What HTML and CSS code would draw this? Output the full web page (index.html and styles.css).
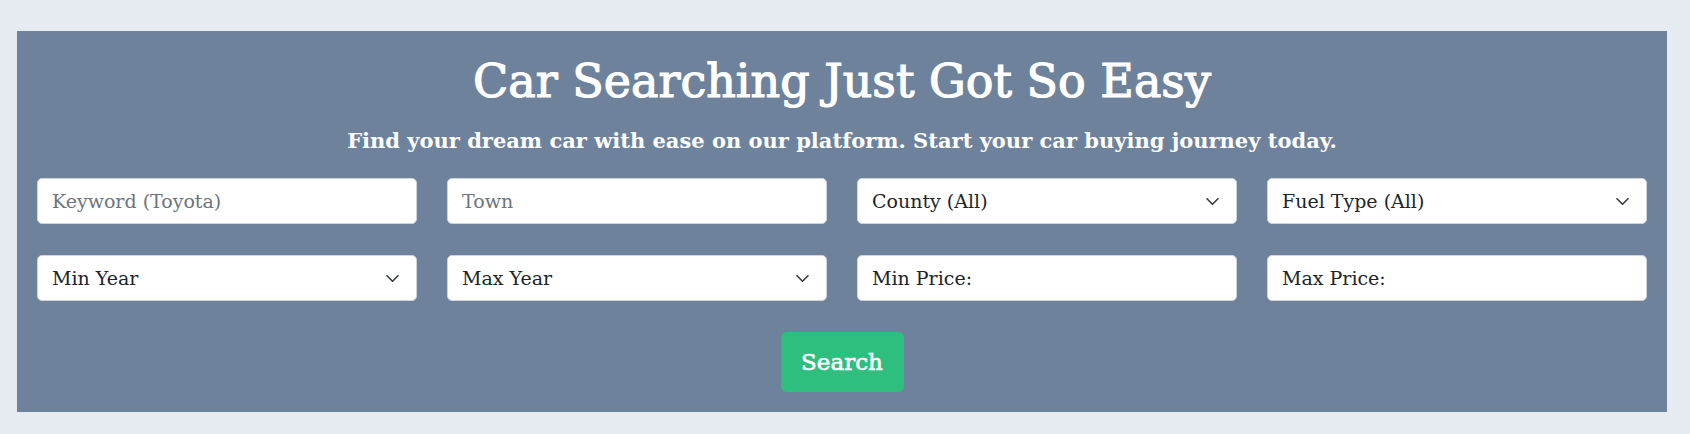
FILE: index.html
```html
<!DOCTYPE html>
<html lang="en">
<head>
<meta charset="utf-8">
<title>Car Search</title>
<link rel="stylesheet" href="styles.css">
</head>
<body>
<section class="hero">
  <h1 class="hero-title">Car Searching Just Got So Easy</h1>
  <p class="hero-sub">Find your dream car with ease on our platform. Start your car buying journey today.</p>
  <form class="search-grid">
    <input class="field" type="text" placeholder="Keyword (Toyota)">
    <input class="field" type="text" placeholder="Town">
    <div class="select-wrap">
      <select class="field select"><option>County (All)</option></select>
      <svg class="chev" width="13" height="7" viewBox="0 0 13 7"><path d="M1 0.8l5.5 5.4 5.5-5.4" fill="none" stroke="#343a40" stroke-width="1.6" stroke-linecap="round" stroke-linejoin="round"/></svg>
    </div>
    <div class="select-wrap">
      <select class="field select"><option>Fuel Type (All)</option></select>
      <svg class="chev" width="13" height="7" viewBox="0 0 13 7"><path d="M1 0.8l5.5 5.4 5.5-5.4" fill="none" stroke="#343a40" stroke-width="1.6" stroke-linecap="round" stroke-linejoin="round"/></svg>
    </div>
    <div class="select-wrap">
      <select class="field select"><option>Min Year</option></select>
      <svg class="chev" width="13" height="7" viewBox="0 0 13 7"><path d="M1 0.8l5.5 5.4 5.5-5.4" fill="none" stroke="#343a40" stroke-width="1.6" stroke-linecap="round" stroke-linejoin="round"/></svg>
    </div>
    <div class="select-wrap">
      <select class="field select"><option>Max Year</option></select>
      <svg class="chev" width="13" height="7" viewBox="0 0 13 7"><path d="M1 0.8l5.5 5.4 5.5-5.4" fill="none" stroke="#343a40" stroke-width="1.6" stroke-linecap="round" stroke-linejoin="round"/></svg>
    </div>
    <input class="field dark" type="text" placeholder="Min Price:">
    <input class="field dark" type="text" placeholder="Max Price:">
  </form>
  <div class="actions">
    <button class="btn-search" type="button">Search</button>
  </div>
</section>
</body>
</html>
```
FILE: styles.css
```css
* { box-sizing: border-box; }
html, body { margin: 0; }
body {
  background: #e6ebf2;
  padding: 31px 23px 22px 17px;
  font-family: "DejaVu Serif", "Liberation Serif", serif;
}
.hero {
  background: #6e839b;
  padding: 24px 20px 20px;
  color: #fff;
}
.hero-title {
  margin: 0;
  text-align: center;
  font-size: 46px;
  font-weight: 400;
  line-height: 52px;
  -webkit-text-stroke: 1.2px #fff;
}
.hero-sub {
  margin: 19px 0 0;
  text-align: center;
  font-size: 21px;
  font-weight: 700;
  line-height: 30px;
}
.search-grid {
  margin-top: 22px;
  display: grid;
  grid-template-columns: repeat(4, 1fr);
  column-gap: 30px;
  row-gap: 31px;
}
.field {
  display: block;
  width: 100%;
  height: 46px;
  margin: 0;
  padding: 0 14px;
  border: 1px solid #ced4da;
  border-radius: 5px;
  background: #fff;
  color: #212529;
  font-family: inherit;
  font-size: 19px;
  outline: none;
}
.field::placeholder { color: #6c757d; }
.field.dark::placeholder { color: #212529; }
.select-wrap { position: relative; }
.select {
  -webkit-appearance: none;
  appearance: none;
  padding-right: 40px;
}
.chev {
  position: absolute;
  right: 18px;
  top: 20px;
  pointer-events: none;
}
.actions {
  display: flex;
  justify-content: center;
  margin-top: 31px;
}
.btn-search {
  width: 123px;
  height: 60px;
  border: 0;
  border-radius: 6px;
  background: #2ebf7e;
  color: #fff;
  font-family: inherit;
  font-size: 23px;
  font-weight: 400;
  -webkit-text-stroke: 0.6px #fff;
  padding: 0;
}
```
